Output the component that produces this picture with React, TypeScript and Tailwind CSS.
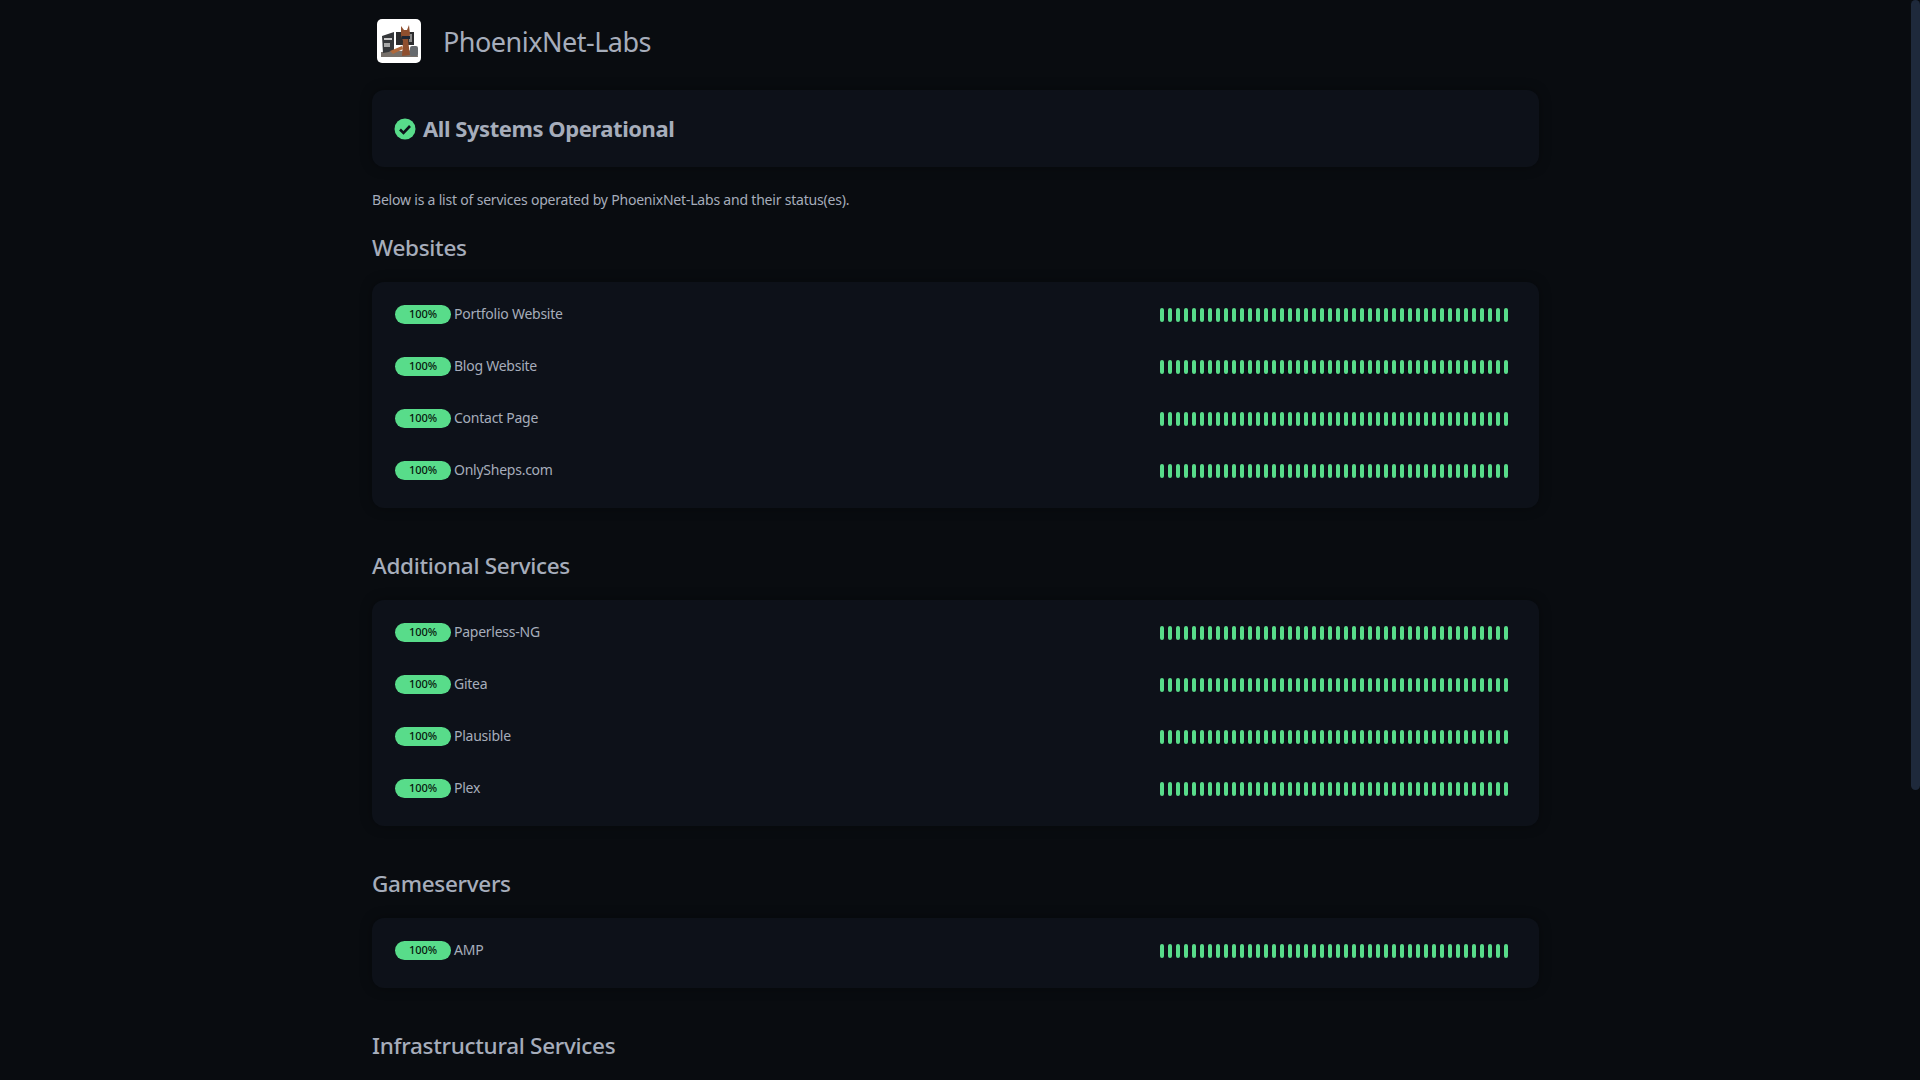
const SECTIONS = [
  { title: 'Websites', services: ['Portfolio Website', 'Blog Website', 'Contact Page', 'OnlySheps.com'] },
  { title: 'Additional Services', services: ['Paperless-NG', 'Gitea', 'Plausible', 'Plex'] },
  { title: 'Gameservers', services: ['AMP'] },
  { title: 'Infrastructural Services', services: [] },
]

const BARS = Array.from({ length: 44 }, (_, i) => i)

function Logo() {
  return (
    <svg width="44" height="44" viewBox="0 0 44 44" className="shrink-0">
      <rect width="44" height="44" rx="5" fill="#ffffff" />
      <path d="M4 33 L40 31 L41 38 L4 38 Z" fill="#77706a" />
      <path d="M5 17 L17 13 L17 32 L6 34 Z" fill="#35373a" />
      <rect x="7" y="19" width="8" height="2" fill="#c9c9c9" />
      <rect x="7" y="24" width="6" height="4" fill="#a8a8a8" />
      <rect x="19" y="13" width="18" height="13" fill="#2c2c2e" />
      <rect x="32" y="15" width="3" height="8" fill="#8a8a8a" />
      <path d="M24 7 L27 11 L30 11 L32 6 L33 15 L31 21 L33 36 L25 37 L26 22 L24 16 Z" fill="#8f4f2e" />
      <rect x="25" y="17" width="8" height="3" fill="#1d2533" />
      <path d="M13 32 L25 27 L26 30 L16 35 Z" fill="#b0683a" />
      <rect x="33" y="27" width="8" height="10" rx="2" fill="#666a6e" />
    </svg>
  )
}

function Row({ name }: { name: string }) {
  return (
    <div className="flex h-[52px] items-center justify-between">
      <div className="mb-[2px] flex items-center gap-[3px]">
        <span className="flex h-[19px] w-14 items-center justify-center rounded-full bg-[#58dc8a] text-[11px] font-medium text-[#06140c]">100%</span>
        <span className="text-sm tracking-[-0.25px] text-[#a6adbb]">{name}</span>
      </div>
      <div className="flex gap-1">
        {BARS.map((b) => (
          <span key={b} className="h-3.5 w-1 rounded-[2px] bg-[#58dc8a]" />
        ))}
      </div>
    </div>
  )
}

export default function App() {
  return (
    <div className="relative h-screen overflow-hidden bg-[#090c10] pr-[9px] font-['Noto_Sans',sans-serif] text-[#a6adbb]">
      <div className="mx-auto w-[1167px]">
        <header className="flex h-[90px] items-center gap-[22px] pb-2 pl-[5px]">
          <Logo />
          <h1 className="text-[27px] leading-none tracking-[-0.5px]">PhoenixNet-Labs</h1>
        </header>

        <div className="flex h-[77px] items-center gap-[7px] rounded-xl bg-[#0d1119] px-[22px] shadow-[0_0_12px_rgba(0,0,0,0.35)]">
          <svg width="22" height="22" viewBox="0 0 22 22">
            <circle cx="11" cy="11" r="10.5" fill="#58dc8a" />
            <path d="M6 11.5 L9.5 15 L16 8" fill="none" stroke="#0d1119" strokeWidth="2.6" />
          </svg>
          <h2 className="text-[22px] font-bold tracking-[-0.45px]">All Systems Operational</h2>
        </div>

        <p className="mb-5 mt-[23px] text-sm tracking-[-0.2px]">Below is a list of services operated by PhoenixNet-Labs and their status(es).</p>

        {SECTIONS.map((s) => (
          <section key={s.title} className="mb-10">
            <h3 className="mb-[18px] pt-[2px] text-[22.5px] font-medium leading-8 tracking-[-0.3px]">{s.title}</h3>
            {s.services.length > 0 && (
              <div className="rounded-xl bg-[#0d1119] pb-[11px] pl-[23px] pr-[31px] pt-[7px] shadow-[0_0_12px_rgba(0,0,0,0.35)]">
                {s.services.map((name) => (
                  <Row key={name} name={name} />
                ))}
              </div>
            )}
          </section>
        ))}
      </div>

      {/* page scrollbar, the headless browser hides the real one */}
      <div className="absolute right-0 top-0 h-[790px] w-[9px] rounded-full bg-[#1e293b]" />
    </div>
  )
}
